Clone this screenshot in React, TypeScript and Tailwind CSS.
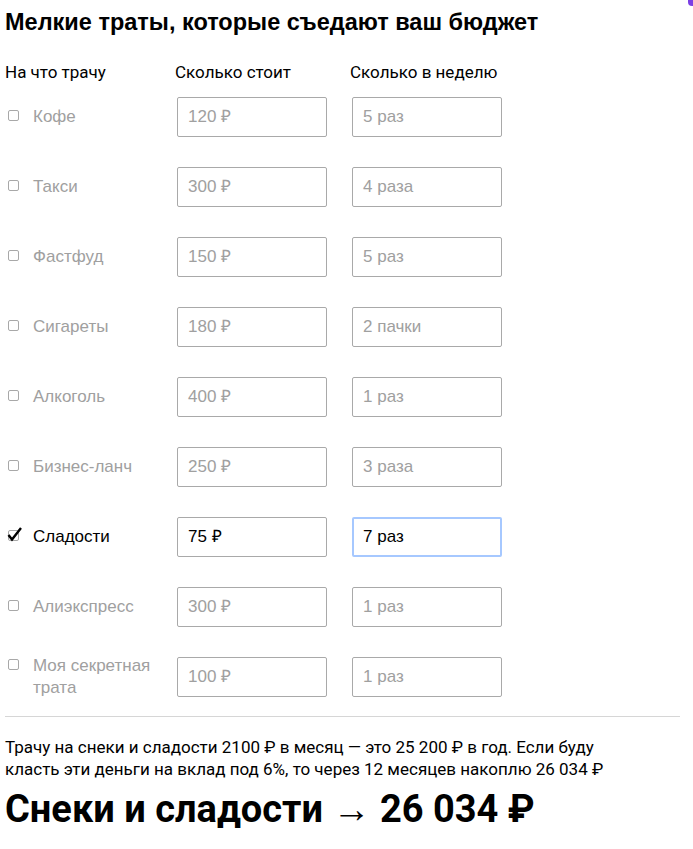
const rows = [
  { label: 'Кофе', price: '120 ₽', times: '5 раз' },
  { label: 'Такси', price: '300 ₽', times: '4 раза' },
  { label: 'Фастфуд', price: '150 ₽', times: '5 раз' },
  { label: 'Сигареты', price: '180 ₽', times: '2 пачки' },
  { label: 'Алкоголь', price: '400 ₽', times: '1 раз' },
  { label: 'Бизнес-ланч', price: '250 ₽', times: '3 раза' },
  { label: 'Сладости', price: '75 ₽', times: '7 раз', checked: true },
  { label: 'Алиэкспресс', price: '300 ₽', times: '1 раз' },
  { label: 'Моя секретная трата', price: '100 ₽', times: '1 раз' },
];

function Row({ label, price, times, checked }: { label: string; price: string; times: string; checked?: boolean }) {
  const text = checked ? 'text-black' : 'text-[#a0a0a0]';
  return (
    <div className="flex h-[70px] items-start pt-[7px]">
      <div className="flex h-[40px] w-[172px] items-center pl-[3px]">
        <div className="flex items-start">
          <span className="relative mt-[4px] h-[11px] w-[11px] shrink-0 rounded-[2px] border border-[#a8a8a8] bg-white">
            {checked && (
              <svg className="absolute left-[-2px] top-[-4px]" width="18" height="18" viewBox="0 0 18 18">
                <path d="M1.5 8 L5 12.5 L14 1" fill="none" stroke="#000" strokeWidth="2.4" strokeLinejoin="miter" />
              </svg>
            )}
          </span>
          <span className={`ml-[14px] w-[135px] text-[17px] leading-[22px] ${text}`}>{label}</span>
        </div>
      </div>
      <div className="flex gap-[25px]">
        <div className={`flex h-[40px] w-[150px] items-center rounded-[2px] border border-[#a9a9a9] px-[10px] text-[17px] ${text}`}>
          {price}
        </div>
        <div
          className={`flex h-[40px] w-[150px] items-center rounded-[2px] text-[17px] ${text} ${
            checked ? 'border-2 border-[#a6c8ff] px-[9px]' : 'border border-[#a9a9a9] px-[10px]'
          }`}
        >
          {times}
        </div>
      </div>
    </div>
  );
}

export default function App() {
  return (
    <div className="relative min-h-[849px] w-[693px] bg-white font-['Liberation_Sans',Arial,sans-serif] text-black">
      <div className="absolute right-0 top-0 h-[6px] w-[5px] rounded-bl-[4px] bg-[#7b3fe4]" />
      <div className="px-[5px] pt-[9px]">
        <h1 className="text-[23.5px] font-bold leading-[26px]">Мелкие траты, которые съедают ваш бюджет</h1>
        <div className="mt-[27px] flex font-['Roboto',sans-serif] text-[17px] leading-[20px]">
          <span className="w-[170px]">На что трачу</span>
          <span className="w-[175px]">Сколько стоит</span>
          <span>Сколько в неделю</span>
        </div>
        <div className="mt-[8px]">
          {rows.map((r) => (
            <Row key={r.label} {...r} />
          ))}
        </div>
        <div className="mr-[8px] mt-[-4px] border-t border-[#d6d6d6]" />
        <p className="mt-[19px] max-w-[625px] font-['Roboto',sans-serif] text-[17px] leading-[22px]">
          Трачу на снеки и сладости 2100 ₽ в месяц — это 25 200 ₽ в год. Если буду класть эти деньги на вклад под 6%, то
          через 12 месяцев накоплю 26 034 ₽
        </p>
        <div className="mt-[6px] font-['Roboto',sans-serif] text-[38px] font-bold leading-[46px]">
          Снеки и сладости <span className="font-normal">→</span> 26 034 ₽
        </div>
      </div>
    </div>
  );
}
